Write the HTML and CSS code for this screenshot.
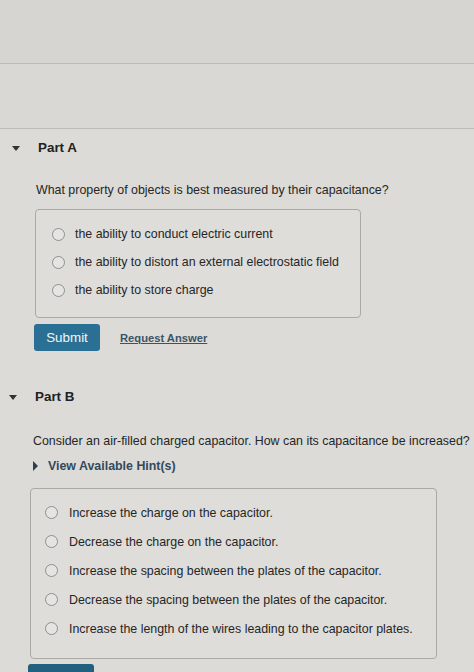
FILE: index.html
```html
<!DOCTYPE html>
<html lang="en">
<head>
  <meta charset="UTF-8" />
  <title>Capacitance</title>
  <link rel="stylesheet" href="styles.css">
</head>
<body>

<div class="band band-1"></div>
<div class="band band-2"></div>

<div class="part part-a">
  <div class="part-head"><span class="caret"></span><h2>Part A</h2></div>
  <p class="question">What property of objects is best measured by their capacitance?</p>
  <div class="choices">
    <label class="choice"><span class="radio"></span>the ability to conduct electric current</label>
    <label class="choice"><span class="radio"></span>the ability to distort an external electrostatic field</label>
    <label class="choice"><span class="radio"></span>the ability to store charge</label>
  </div>
  <div class="actions">
    <button class="submit">Submit</button>
    <a class="request" href="#">Request Answer</a>
  </div>
</div>

<div class="part part-b">
  <div class="part-head"><span class="caret"></span><h2>Part B</h2></div>
  <p class="question">Consider an air-filled charged capacitor. How can its capacitance be increased?</p>
  <div class="hint"><span class="hint-caret"></span>View Available Hint(s)</div>
  <div class="choices">
    <label class="choice"><span class="radio"></span>Increase the charge on the capacitor.</label>
    <label class="choice"><span class="radio"></span>Decrease the charge on the capacitor.</label>
    <label class="choice"><span class="radio"></span>Increase the spacing between the plates of the capacitor.</label>
    <label class="choice"><span class="radio"></span>Decrease the spacing between the plates of the capacitor.</label>
    <label class="choice"><span class="radio"></span>Increase the length of the wires leading to the capacitor plates.</label>
  </div>
  <div class="actions">
    <button class="submit">Submit</button>
  </div>
</div>

</body>
</html>
```

FILE: styles.css
```css
body { margin: 0; background: #dcdbd7; font-family: 'Liberation Sans', Arial, sans-serif; color: #262626; overflow: hidden; }
.band { border-bottom: 1px solid #bdbcb8; }
.band-1 { height: 63px; background: #d6d5d1; }
.band-2 { height: 64px; background: #d9d8d4; }

.part-head { display: flex; align-items: center; height: 16px; }
.part-head h2 { margin: 0; font-size: 13.4px; line-height: 16px; font-weight: 700; color: #222; }
.caret { width: 0; height: 0; border-left: 4px solid transparent; border-right: 4px solid transparent; border-top: 5px solid #333; }
.question { margin: 0; font-size: 12.4px; line-height: 16px; white-space: nowrap; }

.choices { border: 1px solid #a9a9a6; border-radius: 4px; background: #dedddA; }
.choice { display: flex; align-items: center; font-size: 12.4px; white-space: nowrap; }
.radio { width: 11px; height: 11px; border: 1px solid #8f8f8d; border-radius: 50%; background: #e4e4e2; flex: none; }

.actions { display: flex; align-items: center; }
.submit { background: #2a6f94; color: #f2f6f8; border: 0; border-radius: 3px; font-family: inherit; font-size: 13.4px; padding: 0; width: 66px; height: 27px; }
.request { font-size: 11.2px; font-weight: 700; color: #3b5568; text-decoration: underline; }

/* part A */
.part-a { padding: 11px 0 0 12px; }
.part-a .caret { margin-right: 18px; }
.part-a .question { margin: 26px 0 0 24px; }
.part-a .choices { margin: 11px 0 0 23px; width: 324px; padding: 10px 0 13px 0; }
.part-a .choice { height: 28px; padding-left: 16px; }
.part-a .radio { margin-right: 10px; }
.part-a .actions { margin: 6px 0 0 22px; }
.part-a .request { margin-left: 20px; }

/* part B */
.part-b { padding: 38px 0 0 9px; }
.part-b .caret { margin-right: 18px; }
.part-b .question { margin: 28px 0 0 24px; }
.part-b .hint { display: flex; align-items: center; height: 16px; margin: 9px 0 0 24px; font-size: 12.4px; font-weight: 700; color: #33495c; }
.hint-caret { width: 0; height: 0; border-top: 5px solid transparent; border-bottom: 5px solid transparent; border-left: 5px solid #2a3f52; margin-right: 10px; }
.part-b .choices { margin: 14px 0 0 21px; width: 405px; padding: 9px 0 15px 0; }
.part-b .choice { height: 29px; padding-left: 14px; }
.part-b .radio { margin-right: 11px; }
.part-b .actions { margin: 5px 0 0 19px; }
.part-b .submit { background: #22607f; }
```
